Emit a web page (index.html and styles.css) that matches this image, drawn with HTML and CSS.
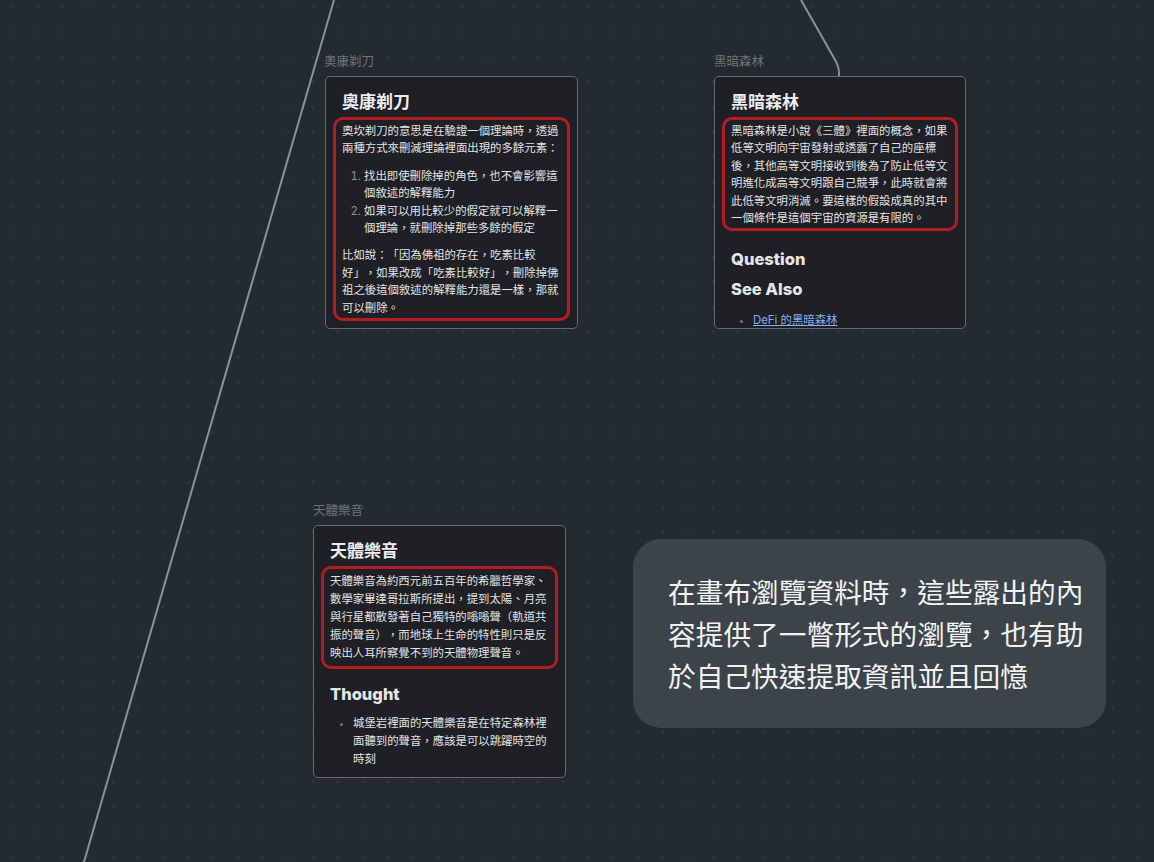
FILE: index.html
```html
<!DOCTYPE html>
<html lang="zh-Hant">

<head>
    <meta charset="UTF-8">
    <title>Canvas</title>
    <link rel="stylesheet" href="styles.css">
</head>

<body>

    <div class="canvas">
        <svg class="edges" width="1154" height="862" viewBox="0 0 1154 862">
            <path d="M 334 0 L 84 862" />
            <path d="M 801 0 L 834 58 Q 839 66 839 73 L 839 76" />
        </svg>

        <!-- 奧康剃刀 -->
        <div class="node node-occam">
            <div class="node-label">奧康剃刀</div>
            <div class="card">
                <h2 class="card-title">奧康剃刀</h2>
                <div class="mark">
                    <p>奧坎剃刀的意思是在驗證一個理論時，透過兩種方式來刪減理論裡面出現的多餘元素：</p>
                    <ol>
                        <li>找出即使刪除掉的角色，也不會影響這個敘述的解釋能力</li>
                        <li>如果可以用比較少的假定就可以解釋一個理論，就刪除掉那些多餘的假定</li>
                    </ol>
                    <p>比如說：「因為佛祖的存在，吃素比較好」，如果改成「吃素比較好」，刪除掉佛祖之後這個敘述的解釋能力還是一樣，那就可以刪除。</p>
                </div>
            </div>
        </div>

        <!-- 黑暗森林 -->
        <div class="node node-forest">
            <div class="node-label">黑暗森林</div>
            <div class="card">
                <h2 class="card-title">黑暗森林</h2>
                <div class="mark">
                    <p>黑暗森林是小說《三體》裡面的概念，如果低等文明向宇宙發射或透露了自己的座標後，其他高等文明接收到後為了防止低等文明進化成高等文明跟自己競爭，此時就會將此低等文明消滅。要這樣的假設成真的其中一個條件是這個宇宙的資源是有限的。</p>
                </div>
                <h3 class="section">Question</h3>
                <h3 class="section section-tight">See Also</h3>
                <ul class="bullets">
                    <li><a href="#">DeFi 的黑暗森林</a></li>
                </ul>
            </div>
        </div>

        <!-- 天體樂音 -->
        <div class="node node-music">
            <div class="node-label">天體樂音</div>
            <div class="card">
                <h2 class="card-title">天體樂音</h2>
                <div class="mark">
                    <p>天體樂音為約西元前五百年的希臘哲學家、數學家畢達哥拉斯所提出，提到太陽、月亮與行星都散發著自己獨特的嗡嗡聲（軌道共振的聲音），而地球上生命的特性則只是反映出人耳所察覺不到的天體物理聲音。</p>
                </div>
                <h3 class="section">Thought</h3>
                <ul class="bullets">
                    <li>城堡岩裡面的天體樂音是在特定森林裡面聽到的聲音，應該是可以跳躍時空的時刻</li>
                </ul>
            </div>
        </div>

        <div class="callout">
            在畫布瀏覽資料時，這些露出的內容提供了一瞥形式的瀏覽，也有助於自己快速提取資訊並且回憶
        </div>
    </div>

</body>

</html>
```

FILE: styles.css
```css
* {
    box-sizing: border-box;
}

body {
    margin: 0;
    background: #232a30;
    font-family: Inter, "Noto Sans CJK TC", sans-serif;
    color: #dedede;
    text-spacing-trim: space-all;
}

.canvas {
    position: relative;
    width: 1154px;
    height: 862px;
    overflow: hidden;
    background-color: #232a30;
    background-image: radial-gradient(circle, #353e45 0.9px, transparent 1.3px);
    background-size: 25px 25px;
    background-position: 0.5px -5.5px;
}

.edges {
    position: absolute;
    left: 0;
    top: 0;
}

.edges path {
    fill: none;
    stroke: #8b9196;
    stroke-width: 2;
}

/* nodes sit on the free canvas */
.node {
    position: absolute;
    width: 253px;
    height: 253px;
}

.node-occam {
    left: 325px;
    top: 76px;
}

.node-forest {
    left: 714px;
    top: 76px;
    width: 252px;
}

.node-music {
    left: 313px;
    top: 525px;
}

.node-label {
    position: absolute;
    left: -1px;
    top: -22px;
    font-size: 12.5px;
    line-height: 16px;
    color: #6c737a;
    white-space: nowrap;
}

.node-forest .node-label,
.node-music .node-label {
    left: 0;
}

.card {
    height: 100%;
    background: #1e2026;
    border: 1px solid #656a70;
    border-radius: 5px;
    padding: 14px 16px 0;
    overflow: hidden;
}

.card-title {
    margin: 0 0 4px;
    font-size: 17px;
    line-height: 22px;
    font-weight: 700;
    color: #ececec;
}

.mark {
    margin: 0 -9px;
    padding: 2px 6px 2px;
    border: 3px solid #b71b22;
    border-radius: 10px;
    font-family: "Noto Sans CJK TC", sans-serif;
    font-size: 11.4px;
    line-height: 17.4px;
    color: #e2e2e2;
}

.node-music .mark {
    line-height: 18px;
    padding-bottom: 5px;
}

.mark p {
    margin: 0;
}

.mark p + ol,
.mark ol + p {
    margin-top: 10px;
}

.mark ol {
    margin-bottom: 0;
    padding-left: 22px;
}

.mark ol li::marker {
    color: #8a8f95;
    font-family: Inter, sans-serif;
}

.section {
    margin: 17px 0 0;
    font-size: 16.5px;
    line-height: 22px;
    font-weight: 800;
    color: #e6e6e6;
}

.node-music .section {
    margin-top: 14px;
}

.section-tight {
    margin-top: 8px;
}

.bullets {
    margin: 10px 0 0;
    padding-left: 22px;
    font-family: "Noto Sans CJK TC", sans-serif;
    font-size: 11.4px;
    line-height: 18px;
    color: #e2e2e2;
}

.node-music .bullets {
    margin-top: 8px;
    padding-left: 23px;
}

.bullets li::marker {
    color: #6f747a;
    font-size: 9px;
}

.bullets a {
    color: #86aef0;
    font-family: Inter, "Noto Sans CJK TC", sans-serif;
}

.callout {
    position: absolute;
    left: 633px;
    top: 539px;
    width: 473px;
    height: 189px;
    padding: 31px 10px 0 35px;
    background: #3c444a;
    border-radius: 28px;
    font-family: "Noto Sans CJK TC", sans-serif;
    font-size: 27.7px;
    line-height: 42px;
    color: #f2f2f2;
}
```
